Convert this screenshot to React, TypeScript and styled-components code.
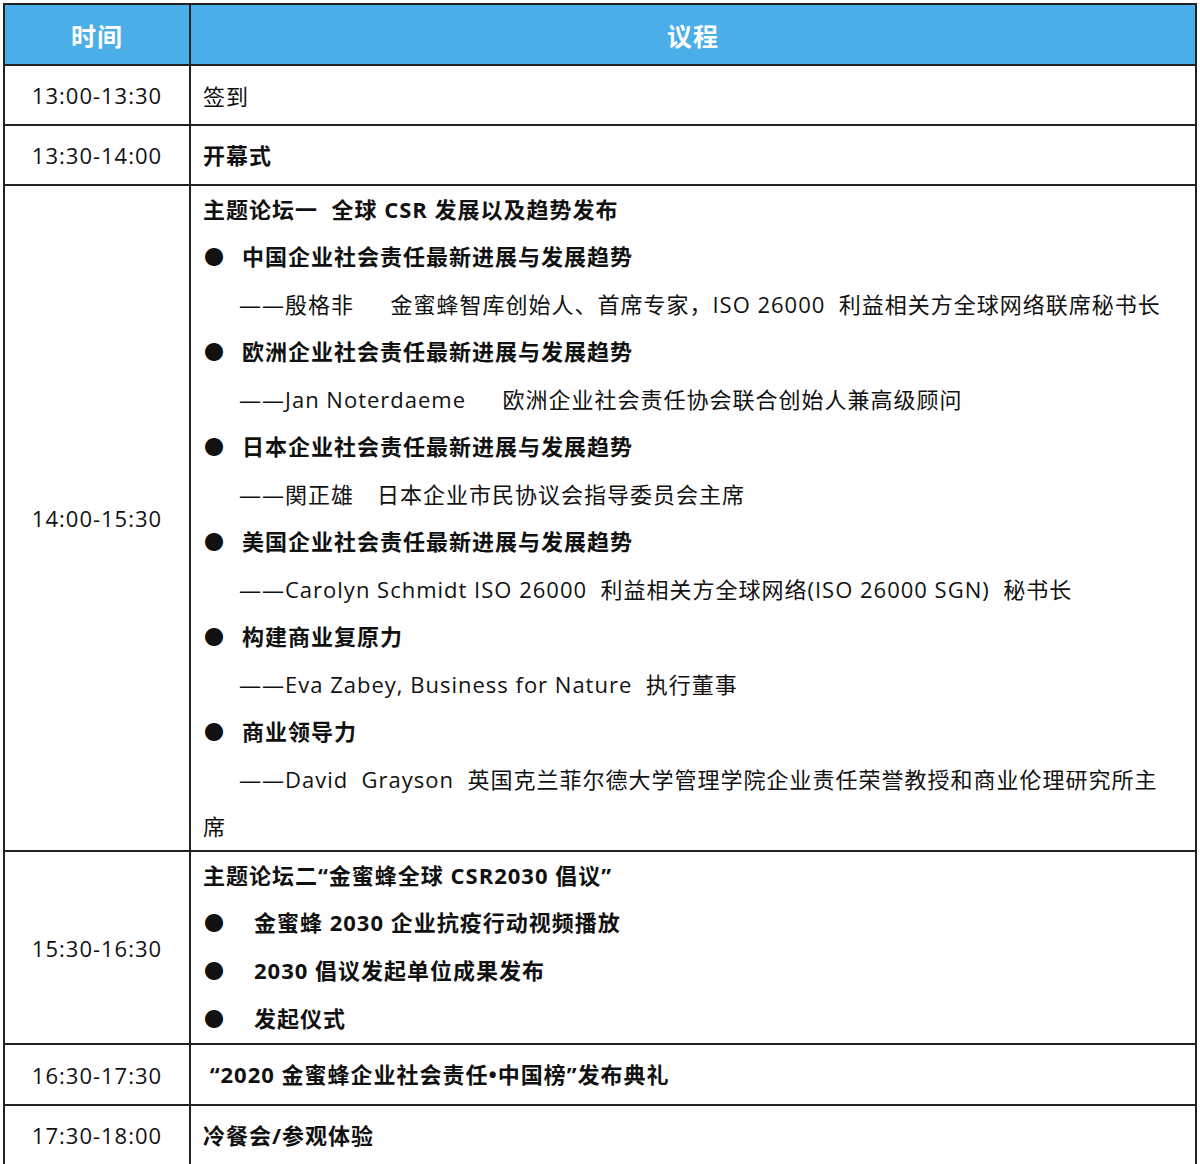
import React from "react";
import styled, { createGlobalStyle } from "styled-components";

const Global = createGlobalStyle`
  body { margin: 0; padding: 3px 3px 0 3px; background: #fff; font-family: "Open Sans", "Noto Sans CJK SC", sans-serif; color: #111; }
`;

const Table = styled.table`
  width: 1194px;
  border-collapse: collapse;
  table-layout: fixed;
  font-size: 22px;
  letter-spacing: 1px;
`;
const Th = styled.th`
  background: #4aaee8;
  color: #fff;
  font-weight: 700;
  font-size: 25px;
  height: 59px;
  border: 2px solid #222;
  padding: 0;
`;
const TimeCell = styled.td`
  border: 2px solid #222;
  text-align: center;
  vertical-align: middle;
  padding: 0;
`;
const Cell = styled.td<{ $h?: number }>`
  border: 2px solid #222;
  padding: 0 0 0 12px;
  height: ${(p) => p.$h ?? 58}px;
  vertical-align: middle;
`;
const Line = styled.div<{ $indent?: number; $bold?: boolean }>`
  line-height: 47px;
  padding-left: ${(p) => p.$indent ?? 0}px;
  font-weight: ${(p) => (p.$bold ? 700 : 400)};
  white-space: pre;
`;
const Bullet = styled.span<{ $gap: number }>`
  display: inline-block;
  width: ${(p) => p.$gap}px;
  padding-left: 1px;
  font-size: 20px;
`;

const talks: [string, string][] = [
  ["中国企业社会责任最新进展与发展趋势", "——殷格非　  金蜜蜂智库创始人、首席专家，ISO 26000  利益相关方全球网络联席秘书长"],
  ["欧洲企业社会责任最新进展与发展趋势", "——Jan Noterdaeme　  欧洲企业社会责任协会联合创始人兼高级顾问"],
  ["日本企业社会责任最新进展与发展趋势", "——関正雄　日本企业市民协议会指导委员会主席"],
  ["美国企业社会责任最新进展与发展趋势", "——Carolyn Schmidt ISO 26000  利益相关方全球网络(ISO 26000 SGN)  秘书长"],
  ["构建商业复原力", "——Eva Zabey, Business for Nature  执行董事"],
  ["商业领导力", "——David  Grayson  英国克兰菲尔德大学管理学院企业责任荣誉教授和商业伦理研究所主"],
];

export default function App() {
  return (
    <>
      <Global />
      <Table>
        <colgroup>
          <col style={{ width: 186 }} />
          <col />
        </colgroup>
        <thead>
          <tr>
            <Th>时间</Th>
            <Th>议程</Th>
          </tr>
        </thead>
        <tbody>
          <tr>
            <TimeCell>13:00-13:30</TimeCell>
            <Cell>签到</Cell>
          </tr>
          <tr>
            <TimeCell>13:30-14:00</TimeCell>
            <Cell><Line $bold>开幕式</Line></Cell>
          </tr>
          <tr>
            <TimeCell>14:00-15:30</TimeCell>
            <Cell $h={664}>
              <Line $bold>主题论坛一  全球 CSR 发展以及趋势发布</Line>
              {talks.map(([t, s]) => (
                <React.Fragment key={t}>
                  <Line $bold><Bullet $gap={38}>●</Bullet>{t}</Line>
                  <Line $indent={36}>{s}</Line>
                </React.Fragment>
              ))}
              <Line>席</Line>
            </Cell>
          </tr>
          <tr>
            <TimeCell>15:30-16:30</TimeCell>
            <Cell $h={187}>
              <Line $bold>主题论坛二“金蜜蜂全球 CSR2030 倡议”</Line>
              <Line $bold><Bullet $gap={50}>●</Bullet>金蜜蜂 2030 企业抗疫行动视频播放</Line>
              <Line $bold><Bullet $gap={50}>●</Bullet>2030 倡议发起单位成果发布</Line>
              <Line $bold><Bullet $gap={50}>●</Bullet>发起仪式</Line>
            </Cell>
          </tr>
          <tr>
            <TimeCell>16:30-17:30</TimeCell>
            <Cell $h={59}><Line $bold> “2020 金蜜蜂企业社会责任•中国榜”发布典礼</Line></Cell>
          </tr>
          <tr>
            <TimeCell>17:30-18:00</TimeCell>
            <Cell $h={58}><Line $bold>冷餐会/参观体验</Line></Cell>
          </tr>
        </tbody>
      </Table>
    </>
  );
}
